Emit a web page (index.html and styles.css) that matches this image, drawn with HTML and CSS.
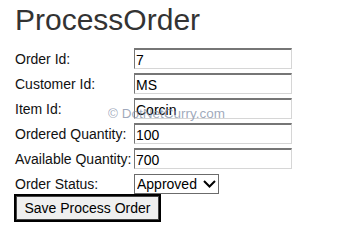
FILE: index.html
```html
<!DOCTYPE html>
<html>
<head>
<meta charset="utf-8">
<link rel="stylesheet" href="styles.css">
</head>
<body>
<main class="page">
  <h2 class="title">ProcessOrder</h2>
  <form class="form">
    <label class="lbl">Order Id:</label>
    <input class="field" type="text" value="7">
    <label class="lbl">Customer Id:</label>
    <input class="field" type="text" value="MS">
    <label class="lbl">Item Id:</label>
    <input class="field" type="text" value="Corcin">
    <label class="lbl">Ordered Quantity:</label>
    <input class="field" type="text" value="100">
    <label class="lbl">Available Quantity:</label>
    <input class="field" type="text" value="700">
    <label class="lbl">Order Status:</label>
    <div class="select-wrap">
      <select class="select"><option>Approved</option></select>
      <svg class="chev" width="13" height="8" viewBox="0 0 13 8"><path d="M1 1 L6.5 6.5 L12 1" fill="none" stroke="#000" stroke-width="2"/></svg>
    </div>
  </form>
  <button class="btn" type="button">Save Process Order</button>
  <div class="watermark">© DotNetCurry.com</div>
</main>
</body>
</html>
```
FILE: styles.css
```css
html, body {
  margin: 0;
  padding: 0;
  background: #fff;
}
.page {
  position: relative;
  padding: 3px 0 0 15px;
  font-family: "Liberation Sans", Arial, sans-serif;
  font-size: 14px;
  color: #000;
}
.title {
  margin: 0;
  font-size: 30px;
  line-height: 34px;
  font-weight: normal;
  color: #333;
}
.form {
  display: grid;
  grid-template-columns: 119px 158px;
  grid-auto-rows: 21px;
  row-gap: 4px;
  align-items: center;
  margin-top: 11px;
}
.lbl {
  font-size: 14px;
  line-height: 16px;
  white-space: nowrap;
  color: #111;
}
.field {
  box-sizing: border-box;
  width: 158px;
  height: 21px;
  margin: 0;
  padding: 1px 0 0 1px;
  font-family: "Liberation Sans", Arial, sans-serif;
  font-size: 14px;
  color: #000;
  background: #fff;
  border-top: 2px solid #767676;
  border-left: 1px solid #767676;
  border-right: 1px solid #d6d6d6;
  border-bottom: 1px solid #d6d6d6;
  outline: none;
}
.select-wrap {
  box-sizing: border-box;
  display: inline-flex;
  align-items: center;
  justify-self: start;
  width: 85px;
  height: 20px;
  margin-top: 1px;
  border: 1px solid #6b6b6b;
  background: #fff;
}
.select {
  appearance: none;
  -webkit-appearance: none;
  border: none;
  background: transparent;
  margin: 0;
  padding: 0 0 0 2px;
  font-family: "Liberation Sans", Arial, sans-serif;
  font-size: 14px;
  color: #000;
  width: 66px;
  outline: none;
}
.chev {
  margin-left: 2px;
  display: block;
}
.btn {
  box-sizing: border-box;
  display: block;
  width: 147px;
  height: 28px;
  margin: 0 0 0 -1px;
  padding: 0 8px;
  font-family: "Liberation Sans", Arial, sans-serif;
  font-size: 14px;
  color: #000;
  background: #efefef;
  border: 2px solid #000;
  box-shadow: inset 0 0 0 1px #444;
}
.watermark {
  position: absolute;
  left: 108px;
  top: 106px;
  font-size: 13.5px;
  line-height: 16px;
  color: rgba(128, 140, 165, 0.75);
  white-space: nowrap;
  pointer-events: none;
}
```
